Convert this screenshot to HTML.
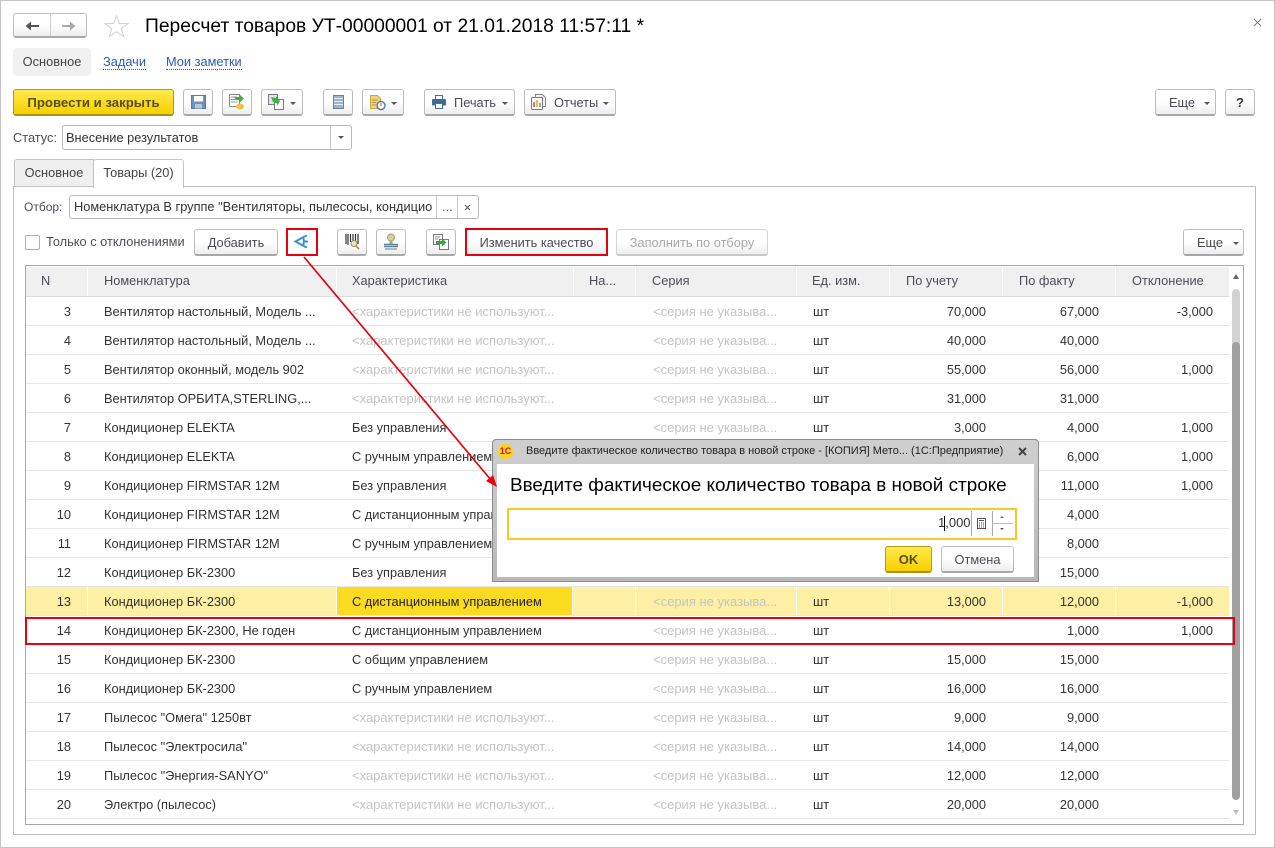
<!DOCTYPE html>
<html><head><meta charset="utf-8">
<style>
html,body{margin:0;padding:0;background:#fff}
#p{position:relative;width:1275px;height:848px;overflow:hidden;background:#fff;font:12.8px/16px "Liberation Sans",sans-serif;color:#333;box-sizing:border-box}
#p *{box-sizing:border-box}
.a{position:absolute;white-space:nowrap}
.b{position:absolute;border:1px solid #bdbdbd;border-bottom:2px solid #a8a8a8;border-radius:3px;background:linear-gradient(#fff 50%,#ededed);color:#4a4a55;text-align:center;line-height:26px;white-space:nowrap;height:27px}
.t{position:absolute;border-top:3.5px solid #555;border-left:3px solid transparent;border-right:3px solid transparent;width:0;height:0}
.r{position:absolute;left:26px;width:1203px;height:29px;border-bottom:1px solid #e6e6e6;line-height:29px}
.r span{position:absolute;top:0;white-space:nowrap}
.n{right:1158px}.m{left:78px}.h{left:326px}.s{left:627px;color:#c4c4c4;font-size:13px}.u{left:787px}
.f1{right:243px}.f2{right:130px}.f3{right:16px}
.g{color:#c4c4c4;font-size:13px}
.hd{position:absolute;top:267px;height:29px;background:#f0f0f0;line-height:28px;color:#4d4d58;padding-left:16px;white-space:nowrap}
.red{position:absolute;border:2px solid #e8000d}
svg{position:absolute;overflow:visible}
</style></head><body><div id="p">
<div class="a" style="left:0;top:0;width:1275px;height:848px;border:1px solid #c4c4c4"></div>

<!-- header -->
<div class="b" style="left:13px;top:13px;width:74px;height:25px"></div>
<div class="a" style="left:50px;top:14px;width:1px;height:22px;background:#d0d0d0"></div>
<svg style="left:25px;top:21px" width="14" height="10"><path d="M14 5H5" stroke="#555" stroke-width="2"/><path d="M6 .5L.5 5 6 9.500z" fill="#555"/></svg>
<svg style="left:62px;top:21px" width="14" height="10"><path d="M0 5h9" stroke="#aaa" stroke-width="2"/><path d="M8 .5L13.500 5 8 9.500z" fill="#aaa"/></svg>
<svg style="left:104px;top:14px" width="25" height="24"><path d="M12.500 1.500l3 8h8.500l-6.700 5.200 2.500 8-7.300-4.900-7.300 4.900 2.500-8L1 9.500h8.500z" fill="#fff" stroke="#d2d2d2" stroke-width="1"/></svg>
<div class="a" style="left:145px;top:16px;font-size:19.25px;line-height:22px;color:#000">Пересчет товаров УТ-00000001 от 21.01.2018 11:57:11 *</div>
<svg style="left:1254px;top:19px" width="7" height="7"><path d="M0 0l7 7M7 0l-7 7" stroke="#777" stroke-width=".9"/></svg>

<div class="a" style="left:13px;top:48px;width:78px;height:28px;background:#f0f0f0;border-radius:4px;line-height:28px;text-align:center;color:#444">Основное</div>
<div class="a" style="left:103px;top:55px;color:#2a5db0;border-bottom:1px dotted #2a5db0;line-height:14px">Задачи</div>
<div class="a" style="left:166px;top:55px;color:#2a5db0;border-bottom:1px dotted #2a5db0;line-height:14px">Мои заметки</div>

<!-- toolbar -->
<div class="b" style="left:13px;top:89px;width:161px;background:linear-gradient(#ffe94d,#f8d000);border:1px solid #b69a20;border-bottom:2px solid #a88f20;color:#5a4d10;font-weight:bold;font-size:13.2px">Провести и закрыть</div>
<div class="b" style="left:183px;top:89px;width:30px"></div>
<svg style="left:191px;top:95px" width="15" height="14"><path d="M.5.500h14v13.000H.5z" fill="#6b93bf" stroke="#557aa3"/><rect x="3" y="1" width="9" height="5.500" fill="#fff"/><rect x="4" y="9" width="7" height="4.500" fill="#b8c8d8"/></svg>
<div class="b" style="left:222px;top:89px;width:30px"></div>
<svg style="left:229px;top:94px" width="16" height="16"><rect x=".5" y=".5" width="10" height="12" fill="#fff" stroke="#888"/><path d="M2 3h6M2 5.500h6M2 8h6" stroke="#999"/><ellipse cx="11" cy="12.500" rx="4" ry="3" fill="#e9c44b"/><path d="M5 3h5V0l5 4.500-5 4.500V6H7z" fill="#3fb13f"/></svg>
<div class="b" style="left:261px;top:89px;width:42px"></div>
<svg style="left:268px;top:94px" width="16" height="16"><rect x=".5" y=".5" width="9" height="10" fill="#dfe5ee" stroke="#778"/><rect x="6.500" y="5.500" width="9" height="10" fill="#fff" stroke="#778"/><path d="M3 3l5 1v-2l4 5-3 5v-2.500L5 8z" fill="#3fb13f"/></svg>
<i class="t" style="left:290px;top:102px"></i>
<div class="b" style="left:323px;top:89px;width:30px"></div>
<svg style="left:333px;top:95px" width="11" height="14"><rect x=".5" y=".5" width="10" height="13" fill="#9db4ca" stroke="#6a8199"/><path d="M1 3.500h9M1 6.500h9M1 9.500h9" stroke="#e6edf3"/></svg>
<div class="b" style="left:362px;top:89px;width:42px"></div>
<svg style="left:370px;top:95px" width="16" height="15"><path d="M.5.500h7l3 3v10H.5z" fill="#f0d27a" stroke="#c9a64a"/><path d="M2 5h6M2 7.500h4M2 10h4" stroke="#b89642"/><circle cx="11" cy="10.500" r="4" fill="#fff" stroke="#5a7fb0" stroke-width="1.500"/><path d="M11 8v3" stroke="#d33"/></svg>
<i class="t" style="left:391px;top:102px"></i>

<div class="b" style="left:424px;top:89px;width:91px;text-align:left;padding-left:29px">Печать</div>
<svg style="left:432px;top:95px" width="14" height="14"><rect x="3.500" y=".5" width="7" height="4" fill="#fff" stroke="#476e93"/><rect x="0" y="4" width="14" height="6.500" rx="1" fill="#3f6a93"/><rect x="3.500" y="8.500" width="7" height="5" fill="#fff" stroke="#476e93"/></svg>
<i class="t" style="left:502px;top:102px"></i>
<div class="b" style="left:524px;top:89px;width:92px;text-align:left;padding-left:29px">Отчеты</div>
<svg style="left:531px;top:94px" width="16" height="16"><path d="M4.500.5h7l3 3v9h-10z" fill="#f2f2f2" stroke="#888"/><rect x=".5" y="3.500" width="11" height="12" rx="1" fill="#fff" stroke="#777"/><path d="M3 13V8" stroke="#d8453a" stroke-width="1.500"/><path d="M6 13V6" stroke="#e8a33a" stroke-width="1.500"/><path d="M9 13V9" stroke="#4aa84a" stroke-width="1.500"/></svg>
<i class="t" style="left:603px;top:102px"></i>
<div class="b" style="left:1155px;top:89px;width:61px;text-align:left;padding-left:13px">Еще</div>
<i class="t" style="left:1204px;top:102px"></i>
<div class="b" style="left:1225px;top:89px;width:30px;font-weight:bold;color:#333;font-size:13px">?</div>

<!-- status -->
<div class="a" style="left:13px;top:130px;color:#4d4d58">Статус:</div>
<div class="a" style="left:62px;top:125px;width:290px;height:25px;border:1px solid #b8b8b8;border-radius:3px;padding-left:3px;line-height:23px;color:#333">Внесение результатов</div>
<div class="a" style="left:330px;top:126px;width:1px;height:23px;background:#c4c4c4"></div>
<i class="t" style="left:338px;top:136px"></i>

<!-- tabs -->
<div class="a" style="left:13px;top:186px;width:1243px;height:649px;border:1px solid #bdbdbd"></div>
<div class="a" style="left:14px;top:159px;width:80px;height:28px;background:#efefef;border:1px solid #c4c4c4;border-radius:3px 0 0 0;line-height:26px;text-align:center;color:#444">Основное</div>
<div class="a" style="left:93px;top:159px;width:91px;height:29px;background:#fff;border:1px solid #c4c4c4;border-bottom:0;border-radius:3px 3px 0 0;line-height:26px;text-align:center;color:#444">Товары (20)</div>

<!-- filter -->
<div class="a" style="left:24px;top:199px;color:#4d4d58;font-size:12px">Отбор:</div>
<div class="a" style="left:69px;top:195px;width:410px;height:24px;border:1px solid #b8b8b8;border-radius:3px;line-height:22px;padding-left:4px;color:#333;overflow:hidden">Номенклатура В группе "Вентиляторы, пылесосы, кондицио</div>
<div class="a" style="left:436px;top:196px;width:1px;height:22px;background:#c8c8c8"></div>
<div class="a" style="left:457px;top:196px;width:1px;height:22px;background:#c8c8c8"></div>
<div class="a" style="left:442px;top:199px;color:#555">...</div>
<svg style="left:464px;top:204px" width="7" height="7"><path d="M1 1l5 5M6 1l-5 5" stroke="#555"/></svg>

<!-- table toolbar -->
<div class="a" style="left:25px;top:235px;width:15px;height:15px;border:1px solid #b0b0b0;border-radius:2px"></div>
<div class="a" style="left:46px;top:234px;color:#4d4d58">Только с отклонениями</div>
<div class="b" style="left:194px;top:229px;width:84px">Добавить</div>
<svg style="left:294px;top:234px" width="15" height="15"><path d="M13 1.500C9 3 6 5 1.500 7.500 6 10 9 12 13 13.500M9 2.500l1 5-1 5M9.500 7.500H14" fill="none" stroke="#3c8fd0" stroke-width="2"/></svg>
<div class="red" style="left:286px;top:228px;width:32px;height:28px"></div>
<div class="b" style="left:337px;top:229px;width:30px"></div>
<svg style="left:345px;top:234px" width="15" height="16"><path d="M1 0v10M3 0v11M5.500 0v8M8 0v7M10.500 0v7M13 0v10" stroke="#333" stroke-width="1.200"/><circle cx="9" cy="9.500" r="3" fill="#e8e4d0" stroke="#a89060"/><path d="M11 12l3 3" stroke="#b08040" stroke-width="1.500"/></svg>
<div class="b" style="left:376px;top:229px;width:30px"></div>
<svg style="left:383px;top:234px" width="16" height="16"><circle cx="8" cy="3.500" r="3.500" fill="#d8cf9a" stroke="#a9a070"/><path d="M6.500 7h3v3h-3z" fill="#8fa9bd"/><path d="M1 10.500h14M1 12.500h14" stroke="#5f8299" stroke-width="1.500"/><path d="M2 15h12" stroke="#5f8299"/></svg>
<div class="b" style="left:426px;top:229px;width:30px"></div>
<svg style="left:433px;top:234px" width="16" height="16"><rect x=".5" y=".5" width="9" height="10" fill="#fff" stroke="#778"/><rect x="6.500" y="5.500" width="9" height="10" fill="#fff" stroke="#778"/><path d="M2 3h5M2 5h3" stroke="#889"/><path d="M3 7h6V4.500l4.500 4-4.500 4V10H3z" fill="#39a839"/></svg>
<div class="b" style="left:466px;top:229px;width:141px">Изменить качество</div>
<div class="red" style="left:465px;top:228px;width:143px;height:28px"></div>
<div class="b" style="left:616px;top:229px;width:152px;color:#a8a8a8;border-color:#d4d4d4;border-bottom-color:#c8c8c8">Заполнить по отбору</div>
<div class="b" style="left:1183px;top:229px;width:61px;text-align:left;padding-left:13px">Еще</div>
<i class="t" style="left:1233px;top:242px"></i>

<!-- table -->
<div class="a" style="left:25px;top:265px;width:1219px;height:560px;border:1px solid #a8a8a8"></div>
<div class="hd" style="left:26px;width:61px;padding-left:15px">N</div>
<div class="hd" style="left:88px;width:248px">Номенклатура</div>
<div class="hd" style="left:337px;width:236px;padding-left:15px">Характеристика</div>
<div class="hd" style="left:574px;width:61px;padding-left:15px">На...</div>
<div class="hd" style="left:636px;width:160px">Серия</div>
<div class="hd" style="left:797px;width:92px;padding-left:15px">Ед. изм.</div>
<div class="hd" style="left:890px;width:112px">По учету</div>
<div class="hd" style="left:1003px;width:112px">По факту</div>
<div class="hd" style="left:1116px;width:113px">Отклонение</div>
<div class="a" style="left:26px;top:296px;width:1203px;height:1px;background:#dcdcdc"></div>

<div class="r" style="top:297px"><span class="n">3</span><span class="m">Вентилятор настольный, Модель ...</span><span class="h g">&lt;характеристики не используют...</span><span class="s">&lt;серия не указыва...</span><span class="u">шт</span><span class="f1">70,000</span><span class="f2">67,000</span><span class="f3">-3,000</span></div>
<div class="r" style="top:326px"><span class="n">4</span><span class="m">Вентилятор настольный, Модель ...</span><span class="h g">&lt;характеристики не используют...</span><span class="s">&lt;серия не указыва...</span><span class="u">шт</span><span class="f1">40,000</span><span class="f2">40,000</span></div>
<div class="r" style="top:355px"><span class="n">5</span><span class="m">Вентилятор оконный, модель 902</span><span class="h g">&lt;характеристики не используют...</span><span class="s">&lt;серия не указыва...</span><span class="u">шт</span><span class="f1">55,000</span><span class="f2">56,000</span><span class="f3">1,000</span></div>
<div class="r" style="top:384px"><span class="n">6</span><span class="m">Вентилятор ОРБИТА,STERLING,...</span><span class="h g">&lt;характеристики не используют...</span><span class="s">&lt;серия не указыва...</span><span class="u">шт</span><span class="f1">31,000</span><span class="f2">31,000</span></div>
<div class="r" style="top:413px"><span class="n">7</span><span class="m">Кондиционер ELEKTA</span><span class="h">Без управления</span><span class="s">&lt;серия не указыва...</span><span class="u">шт</span><span class="f1">3,000</span><span class="f2">4,000</span><span class="f3">1,000</span></div>
<div class="r" style="top:442px"><span class="n">8</span><span class="m">Кондиционер ELEKTA</span><span class="h">С ручным управлением</span><span class="f2">6,000</span><span class="f3">1,000</span></div>
<div class="r" style="top:471px"><span class="n">9</span><span class="m">Кондиционер FIRMSTAR 12M</span><span class="h">Без управления</span><span class="f2">11,000</span><span class="f3">1,000</span></div>
<div class="r" style="top:500px"><span class="n">10</span><span class="m">Кондиционер FIRMSTAR 12M</span><span class="h">С дистанционным управлением</span><span class="f2">4,000</span></div>
<div class="r" style="top:529px"><span class="n">11</span><span class="m">Кондиционер FIRMSTAR 12M</span><span class="h">С ручным управлением</span><span class="f2">8,000</span></div>
<div class="r" style="top:558px"><span class="n">12</span><span class="m">Кондиционер БК-2300</span><span class="h">Без управления</span><span class="f2">15,000</span></div>
<div class="a" style="left:26px;top:587px;width:1203px;height:28px;background:#fdf0a4"></div>
<div class="a" style="left:87px;top:587px;width:1px;height:28px;background:#fff"></div>
<div class="a" style="left:336px;top:587px;width:237px;height:28px;background:#fbdb20;border-left:1px solid #fff;border-right:1px solid #fff"></div>
<div class="a" style="left:635px;top:587px;width:1px;height:28px;background:#fff"></div>
<div class="a" style="left:796px;top:587px;width:1px;height:28px;background:#fff"></div>
<div class="a" style="left:889px;top:587px;width:1px;height:28px;background:#fff"></div>
<div class="a" style="left:1002px;top:587px;width:1px;height:28px;background:#fff"></div>
<div class="a" style="left:1115px;top:587px;width:1px;height:28px;background:#fff"></div>
<div class="r" style="top:587px"><span class="n">13</span><span class="m">Кондиционер БК-2300</span><span class="h" style="color:#222">С дистанционным управлением</span><span class="s">&lt;серия не указыва...</span><span class="u">шт</span><span class="f1">13,000</span><span class="f2">12,000</span><span class="f3">-1,000</span></div>
<div class="r" style="top:616px"><span class="n">14</span><span class="m">Кондиционер БК-2300, Не годен</span><span class="h">С дистанционным управлением</span><span class="s">&lt;серия не указыва...</span><span class="u">шт</span><span class="f2">1,000</span><span class="f3">1,000</span></div>
<div class="r" style="top:645px"><span class="n">15</span><span class="m">Кондиционер БК-2300</span><span class="h">С общим управлением</span><span class="s">&lt;серия не указыва...</span><span class="u">шт</span><span class="f1">15,000</span><span class="f2">15,000</span></div>
<div class="r" style="top:674px"><span class="n">16</span><span class="m">Кондиционер БК-2300</span><span class="h">С ручным управлением</span><span class="s">&lt;серия не указыва...</span><span class="u">шт</span><span class="f1">16,000</span><span class="f2">16,000</span></div>
<div class="r" style="top:703px"><span class="n">17</span><span class="m">Пылесос "Омега" 1250вт</span><span class="h g">&lt;характеристики не используют...</span><span class="s">&lt;серия не указыва...</span><span class="u">шт</span><span class="f1">9,000</span><span class="f2">9,000</span></div>
<div class="r" style="top:732px"><span class="n">18</span><span class="m">Пылесос "Электросила"</span><span class="h g">&lt;характеристики не используют...</span><span class="s">&lt;серия не указыва...</span><span class="u">шт</span><span class="f1">14,000</span><span class="f2">14,000</span></div>
<div class="r" style="top:761px"><span class="n">19</span><span class="m">Пылесос "Энергия-SANYO"</span><span class="h g">&lt;характеристики не используют...</span><span class="s">&lt;серия не указыва...</span><span class="u">шт</span><span class="f1">12,000</span><span class="f2">12,000</span></div>
<div class="r" style="top:790px"><span class="n">20</span><span class="m">Электро (пылесос)</span><span class="h g">&lt;характеристики не используют...</span><span class="s">&lt;серия не указыва...</span><span class="u">шт</span><span class="f1">20,000</span><span class="f2">20,000</span></div>

<!-- scrollbar -->
<div class="a" style="left:1232px;top:289px;width:8px;height:60px;background:#d2d2d2;border-radius:4px 4px 0 0"></div>
<div class="a" style="left:1232px;top:342px;width:8px;height:458px;background:#a0a0a0;border-radius:4px"></div>
<i class="t" style="left:1233px;top:274px;border-top:0;border-bottom:5px solid #666;border-left-width:3.500px;border-right-width:3.500px"></i>
<i class="t" style="left:1233px;top:810px;border-top:5px solid #bbb;border-left-width:3.500px;border-right-width:3.500px"></i>

<div class="red" style="left:25px;top:617px;width:1210px;height:28px"></div>

<!-- dialog -->
<div class="a" style="left:492px;top:439px;width:547px;height:143px;background:linear-gradient(#cfcfcf,#b8b8b8);border:1px solid #8c8c8c;border-radius:4px 4px 0 0"></div>
<div class="a" style="left:497px;top:464px;width:537px;height:113px;background:#fff"></div>
<div class="a" style="left:498px;top:444px;width:15px;height:15px;border-radius:50%;background:#f8d41c;color:#d4141c;font:bold 9px/15px 'Liberation Sans',sans-serif;text-align:center">1С</div>
<div class="a" style="left:526px;top:444px;font-size:11px;line-height:15px;color:#222">Введите фактическое количество товара в новой строке - [КОПИЯ] Мето...  (1С:Предприятие)</div>
<svg style="left:1018px;top:447px" width="9" height="9"><path d="M1 1l7 7M8 1l-7 7" stroke="#444" stroke-width="2"/></svg>
<div class="a" style="left:510px;top:475px;font-size:18.9px;line-height:22px;color:#000">Введите фактическое количество товара в новой строке</div>
<div class="a" style="left:507px;top:508px;width:510px;height:32px;border:2px solid #f8c828"></div>
<div class="a" style="left:938px;top:515px;line-height:16px;color:#333;font-size:13px">1,000</div>
<div class="a" style="left:944px;top:516px;width:1px;height:15px;background:#000"></div>
<div class="a" style="left:971px;top:511px;width:1px;height:25px;background:#aaa"></div>
<div class="a" style="left:992px;top:511px;width:1px;height:25px;background:#aaa"></div>
<div class="a" style="left:993px;top:523px;width:20px;height:1px;background:#bbb"></div>
<svg style="left:977px;top:518px" width="9" height="11"><rect x=".5" y=".5" width="8" height="10" fill="none" stroke="#555"/><path d="M2 2.500h5" stroke="#555"/><path d="M2 5h1M4 5h1M6 5h1M2 7h1M4 7h1M6 7h1M2 9h1M4 9h1M6 9h1" stroke="#555"/></svg>
<i class="t" style="left:1000px;top:516px;border-top:0;border-bottom:2.500px solid #666;border-left-width:2px;border-right-width:2px"></i>
<i class="t" style="left:1000px;top:528px;border-top-width:2.500px;border-left-width:2px;border-right-width:2px"></i>
<div class="b" style="left:885px;top:546px;width:47px;background:linear-gradient(#ffe94d,#f8d000);border:1px solid #b69a20;border-bottom:2px solid #a88f20;color:#5a4d10;font-weight:bold;font-size:13px">OK</div>
<div class="b" style="left:941px;top:546px;width:73px">Отмена</div>

<!-- arrow -->
<svg style="left:0;top:0" width="1275" height="848"><path d="M304 257L491 480" stroke="#e8000d" stroke-width="1.700" fill="none"/><path d="M497 487L486 481 493 475z" fill="#e8000d"/></svg>
</div></body></html>
